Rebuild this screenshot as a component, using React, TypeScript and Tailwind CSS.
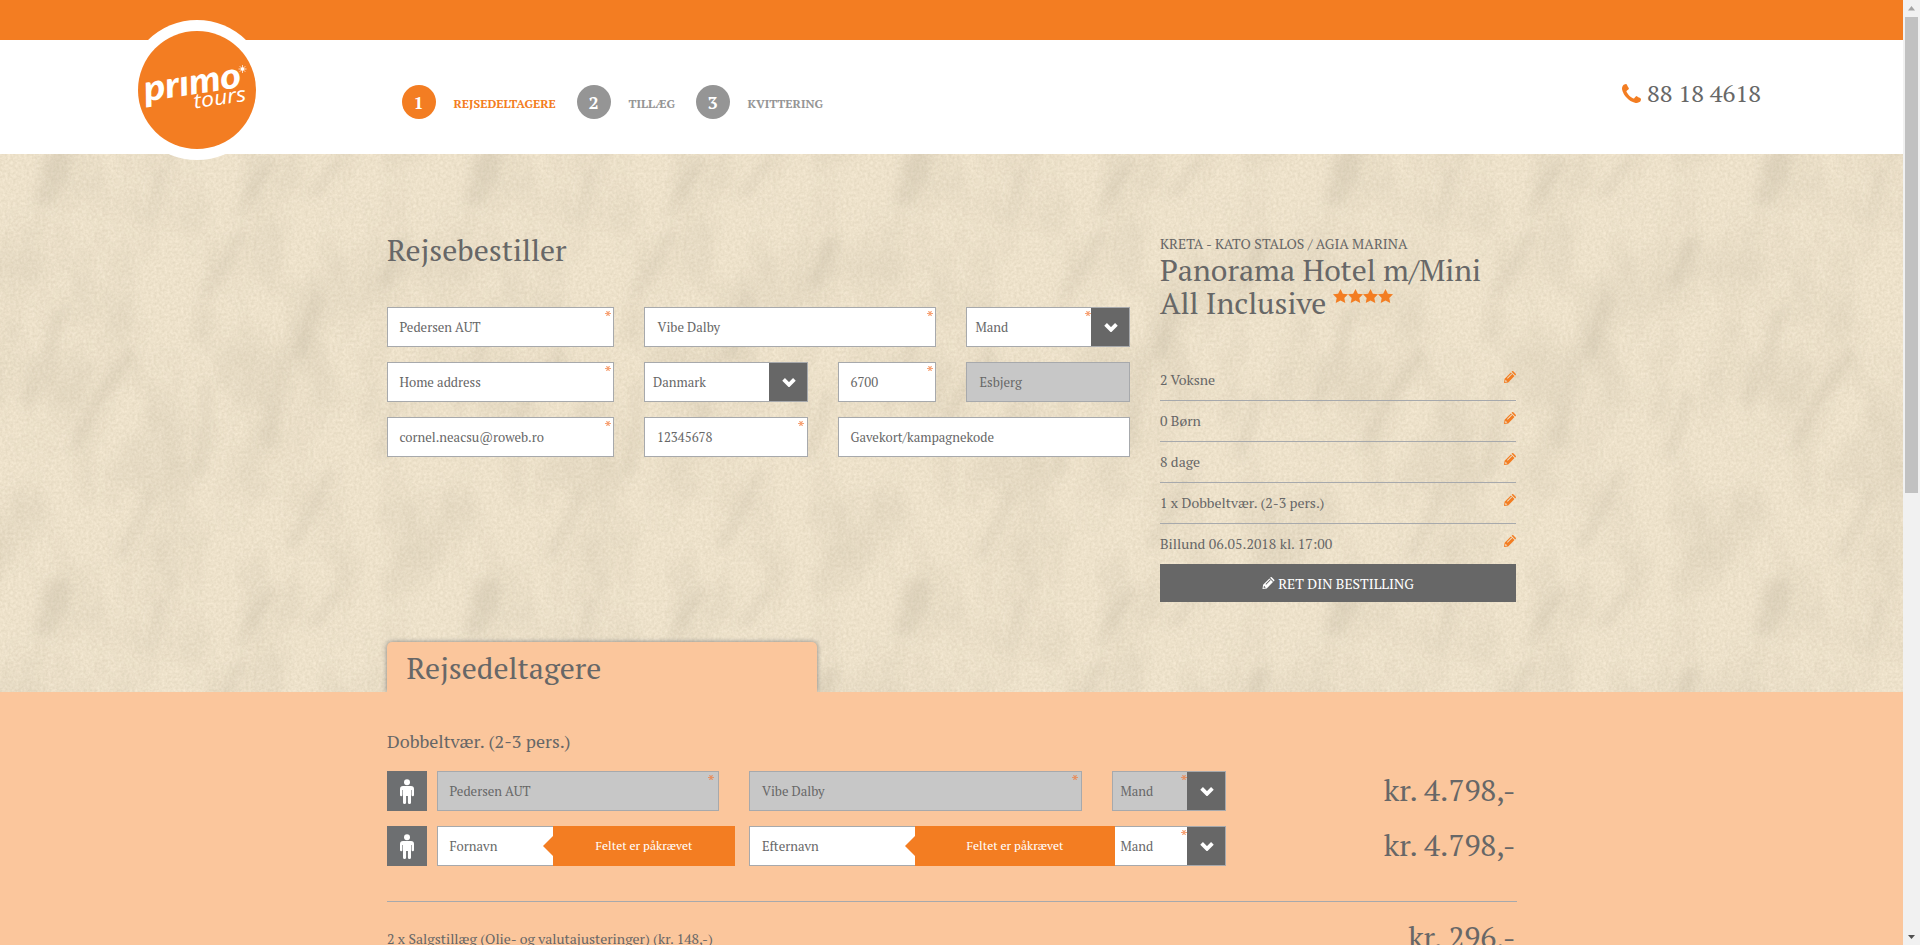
import type { ReactNode } from "react";

const Star = () => (
  <svg viewBox="0 0 15 14" className="h-[14px] w-[15px] fill-[#f37d22]">
    <path d="M7.500 0l2.350 4.700 5.150.55-3.700 3.750.95 5-4.750-2.400L2.750 14l.95-5L0 5.250l5.150-.55z" />
  </svg>
);

const Pencil = ({ className }: { className: string }) => (
  <svg viewBox="0 0 12 12" className={className}>
    <path
      fillRule="evenodd"
      d="M0 12l.6-4.200L6.900 1.500l3.600 3.600L4.200 11.400zM7.600 .8l.5-.5q.6-.6 1.200 0l2.400 2.400q.6.6 0 1.200l-.5.500zM1.500 8.700l-.4 2.200 2.200-.4zM3 7.100l.6.6L8.100 3.200l-.6-.6z"
    />
  </svg>
);

const Phone = () => (
  <svg viewBox="0 128 1408 1408" className="h-[19px] w-[19px] fill-[#f37d22]">
    <path d="M1408 1240q0 27-10 70.500t-21 68.500q-21 50-122 106-94 51-186 51-27 0-53-3.500t-57.500-12.500-47-14.500-55.500-20.500-49-18q-98-35-175-83-127-79-264-216t-216-264q-48-77-83-175-3-9-18-49t-20.500-55.500-14.500-47-12.500-57.500-3.500-53q0-92 51-186 56-101 106-122 25-11 68.500-21t70.500-10q14 0 21 3 18 6 53 76 11 19 30 54t35 63.500 31 53.500q3 4 17.500 25t21.500 35.500 7 28.500q0 20-28.500 50t-62 55-62 53-28.500 46q0 9 5 22.500t8.500 20.500 14 24 11.500 19q76 137 174 235t235 174q2 1 19 11.500t24 14 20.500 8.500 22.500 5q18 0 46-28.500t53-62 55-62 50-28.500q14 0 28.500 7t35.500 21.500 25 17.500q25 15 53.500 31t63.500 35 54 30q70 35 76 53 3 7 3 21z" />
  </svg>
);

const Asterisk = ({ className }: { className: string }) => (
  <svg viewBox="0 0 6 5" className={`absolute h-[5px] w-[6px] ${className}`}>
    <path d="M0 2.500h6M1.500 0l3 5M4.500 0l-3 5" stroke="#f37a3a" strokeOpacity="0.7" strokeWidth="1.200" fill="none" />
  </svg>
);

const PersonBox = () => (
  <div className="flex h-10 w-10 items-center justify-center bg-[#6d6f71]">
    <svg viewBox="0 0 14 25" className="h-[25px] w-[14px] fill-white">
      <circle cx="7" cy="3.200" r="3" />
      <path d="M3 7h8a3 3 0 0 1 3 3v6a1.200 1.200 0 0 1-2.400 0v-5h-.6v12.400a1.500 1.500 0 0 1-3.100 0V17h-1.800v6.400a1.500 1.500 0 0 1-3.100 0V11h-.6v5a1.200 1.200 0 0 1-2.400 0v-6a3 3 0 0 1 3-3z" />
    </svg>
  </div>
);

type FieldProps = { width: string; text: string; required?: boolean; disabled?: boolean; pad?: string; mark?: string; children?: ReactNode };

const Field = ({ width, text, required, disabled, pad = "pl-[11.500px]", mark = "right-[2px]", children }: FieldProps) => (
  <div className={`relative flex h-10 items-center border border-[#a7a9ac] text-[13px] ${width} ${pad} ${disabled ? "bg-[#c7c7c7]" : "bg-white"}`}>
    <span className="pt-[2px]">{text}</span>
    {required && <Asterisk className={`${mark} top-[3px]`} />}
    {children}
  </div>
);

const Select = ({ width, text, required, disabled, pad = "pl-2" }: FieldProps) => (
  <div className={`flex h-10 justify-between border border-[#a7a9ac] text-[13px] ${width} ${pad} ${disabled ? "bg-[#c7c7c7]" : "bg-white"}`}>
    <span className="self-center pt-[2px]">{text}</span>
    <div className="relative flex w-[38px] items-center justify-center bg-[#676767]">
      {required && <Asterisk className="-left-[6px] top-[3px]" />}
      <svg viewBox="0 0 14 9" className="ml-px mt-px h-[9px] w-[14px]">
        <path d="M1.600 1.400L7 6.800l5.400-5.400" fill="none" stroke="#fff" strokeWidth="3.800" />
      </svg>
    </div>
  </div>
);

const Tip = ({ width, offset }: { width: string; offset: string }) => (
  <div className={`absolute -top-px z-10 flex h-10 items-center justify-center bg-[#f37d22] text-[12px] text-white ${width} ${offset}`}>
    <svg viewBox="0 0 10 20" className="absolute -left-[10px] top-[10px] h-5 w-[10px] fill-[#f37d22]">
      <path d="M10 0v20L0 10z" />
    </svg>
    Feltet er påkrævet
  </div>
);

const Step = ({ n, label, active, width }: { n: number; label: string; active?: boolean; width: string }) => (
  <div className={`flex items-center gap-[17.500px] ${width}`}>
    <span className={`flex h-[34px] w-[34px] shrink-0 items-center justify-center rounded-full pr-px text-[18px] font-bold leading-[34px] text-white ${active ? "bg-[#f37d22]" : "bg-[#959595]"}`}>
      {n}
    </span>
    <span className={`whitespace-nowrap pt-[3px] text-[12px] font-bold ${active ? "text-[#f37d22]" : "text-[#959595]"}`}>{label}</span>
  </div>
);

const Sand = () => (
  <svg className="absolute inset-0 h-full w-full" aria-hidden="true">
    <defs>
      <filter id="grain" x="0" y="0" width="100%" height="100%" colorInterpolationFilters="sRGB">
        <feTurbulence type="fractalNoise" baseFrequency="0.37" numOctaves="2" seed="4" stitchTiles="stitch" />
        <feColorMatrix values="0.1 0 0 0 0.880  0.1 0 0 0 0.834  0.11 0 0 0 0.738  0 0 0 0 1" />
      </filter>
      <filter id="cloud" x="0" y="0" width="100%" height="100%" colorInterpolationFilters="sRGB">
        <feTurbulence type="fractalNoise" baseFrequency="0.022 0.012" numOctaves="3" seed="9" stitchTiles="stitch" />
        <feColorMatrix values="0 0 0 0 0.62  0 0 0 0 0.58  0 0 0 0 0.49  0.9 0 0 0 -0.35" />
      </filter>
      <filter id="soft" x="-50%" y="-50%" width="200%" height="200%">
        <feGaussianBlur stdDeviation="6" />
      </filter>
      <g id="creases" filter="url(#soft)" stroke="#958b76" fill="none" strokeLinecap="round" opacity="0.15">
        <path d="M58 6Q54 26 46 42" strokeWidth="24" />
        <path d="M54 20Q52 30 48 40" strokeWidth="14" />
        <path d="M158 18Q160 40 148 62" strokeWidth="10" />
        <path d="M274 6Q256 26 240 58" strokeWidth="9" />
        <path d="M335 10Q326 26 312 40" strokeWidth="9" />
        <path d="M240 80Q226 110 204 140" strokeWidth="9" />
        <path d="M318 145Q306 170 298 200" strokeWidth="9" />
        <path d="M60 160Q44 206 26 250" strokeWidth="8" />
        <path d="M130 200Q100 240 74 292" strokeWidth="10" />
        <path d="M206 230Q208 290 200 320" strokeWidth="9" />
        <path d="M280 210Q282 250 266 290" strokeWidth="9" />
        <path d="M400 90Q390 110 384 130" strokeWidth="12" />
        <path d="M398 240Q392 270 378 300" strokeWidth="10" />
        <path d="M330 320Q310 360 292 390" strokeWidth="11" />
        <path d="M150 340Q136 380 120 400" strokeWidth="10" />
      </g>
      <pattern id="sand" width="430" height="430" patternUnits="userSpaceOnUse">
        <rect width="430" height="430" filter="url(#grain)" />
        <rect width="430" height="430" filter="url(#cloud)" opacity="0.35" />
        <use href="#creases" />
        <use href="#creases" y="430" />
        <use href="#creases" y="-430" />
      </pattern>
    </defs>
    <rect width="100%" height="100%" fill="url(#sand)" />
  </svg>
);

const Logo = () => (
  <svg viewBox="0 0 140 140" className="absolute left-[127px] top-5 z-20 h-[140px] w-[140px]">
    <circle cx="70" cy="70" r="70" fill="#fff" />
    <circle cx="70" cy="70" r="59" fill="#f37d22" />
    <g fill="#fff" transform="translate(18.500 81.500) rotate(-8.500)">
      <text x="0" y="0" fontFamily="Lato, sans-serif" fontWeight="900" fontStyle="italic" fontSize="36" textLength="98" lengthAdjust="spacingAndGlyphs">
        prımo
      </text>
    </g>
    <g fill="#fff" transform="translate(67.500 88.500) rotate(-8.500)">
      <text x="0" y="0" fontFamily="Open Sans, sans-serif" fontStyle="italic" fontSize="20.500" textLength="53" lengthAdjust="spacingAndGlyphs">
        tours
      </text>
    </g>
    <circle cx="115.500" cy="49" r="1.800" fill="#fff" />
    <path d="M115.500 45v8M111.500 49h8M112.700 46.200l5.600 5.600M118.300 46.200l-5.600 5.600" stroke="#fff" strokeWidth="0.7" />
  </svg>
);

const Price = ({ children }: { children: ReactNode }) => (
  <span className="block text-[30px] leading-[38px]">{children}</span>
);

const summary = ["2 Voksne", "0 Børn", "8 dage", "1 x Dobbeltvær. (2-3 pers.)", "Billund 06.05.2018 kl. 17:00"];

export default function App() {
  return (
    <div className="flex h-[945px] w-[1920px] overflow-hidden font-['PT_Serif','Liberation_Serif',serif] text-[#676767]">
      <div className="relative flex w-[1903px] flex-col">
        <Logo />
        <div className="h-10 shrink-0 bg-[#f37d22]" />
        <header className="flex h-[114px] shrink-0 items-start bg-white pl-[402px]">
          <nav className="flex pt-[45px]">
            <Step n={1} label="REJSEDELTAGERE" active width="w-[175px]" />
            <Step n={2} label="TILLÆG" width="w-[119px]" />
            <Step n={3} label="KVITTERING" width="w-[130px]" />
          </nav>
          <div className="ml-auto mr-[142px] flex items-center gap-[6px] pt-[37px] text-[24px] leading-[32px]">
            <Phone />
            <span>88 18 4618</span>
          </div>
        </header>

        <section className="relative h-[538px] shrink-0">
          <Sand />
          <div className="relative flex h-full pl-[387px] pt-[80px]">
            <div className="flex w-[773px] flex-col">
              <h1 className="text-[30px] leading-[33px]">Rejsebestiller</h1>
              <div className="mt-[40px] flex flex-col gap-[15px]">
                <div className="flex gap-[30px]">
                  <Field width="w-[227px]" text="Pedersen AUT" required />
                  <Field width="w-[292px]" text="Vibe Dalby" required pad="pl-[12.500px]" />
                  <Select width="w-[164px]" text="Mand" required pad="pl-[8.500px]" />
                </div>
                <div className="flex gap-[30px]">
                  <Field width="w-[227px]" text="Home address" required />
                  <Select width="w-[164px]" text="Danmark" />
                  <Field width="w-[98px]" text="6700" required />
                  <Field width="w-[164px]" text="Esbjerg" disabled pad="pl-[12.500px]" />
                </div>
                <div className="flex gap-[30px]">
                  <Field width="w-[227px]" text="cornel.neacsu@roweb.ro" required />
                  <Field width="w-[164px]" text="12345678" required pad="pl-3" mark="right-[3px]" />
                  <Field width="w-[292px]" text="Gavekort/kampagnekode" />
                </div>
              </div>
              <div className="mt-auto flex h-[50px] w-[430px] items-center rounded-t-[5px] bg-[#fbc69c] pl-[19.500px] shadow-[0_0_5px_#808080] [clip-path:inset(-10px_-10px_0_-10px)]">
                <h2 className="pt-[3px] text-[30px] leading-[33px]">Rejsedeltagere</h2>
              </div>
            </div>

            <aside className="w-[356px]">
              <div className="text-[14px] leading-[19px] tracking-[0.04px]">KRETA - KATO STALOS / AGIA MARINA</div>
              <div className="mt-px h-[66px] text-[30px] leading-[33px]">
                <div className="whitespace-nowrap">Panorama Hotel m/Mini</div>
                <div className="flex">
                  All Inclusive
                  <span className="ml-[7px] mt-[2px] flex">
                    <Star /><Star /><Star /><Star />
                  </span>
                </div>
              </div>
              <ul className="mt-10 text-[14px] leading-5">
                {summary.map((item, i) => (
                  <li key={item} className={`flex h-[41px] justify-between pt-[10px] ${i < 4 ? "border-b border-[#a7a9ac]" : "-mb-px"}`}>
                    {item}
                    <Pencil className="mt-px h-3 w-3 fill-[#f37d22]" />
                  </li>
                ))}
              </ul>
              <div className="relative flex h-[38px] items-center justify-center gap-[3px] bg-[#676767] text-[14px] text-white">
                <Pencil className="h-3 w-[13px] fill-white" />
                RET DIN BESTILLING
              </div>
            </aside>
          </div>
        </section>

        <section className="flex-1 bg-[#fbc69c] pl-[387px] pt-[39px]">
          <div className="w-[1130px]">
            <h3 className="text-[18px] leading-5">Dobbeltvær. (2-3 pers.)</h3>
            <div className="mt-5 flex flex-col gap-[15px]">
              <div className="flex">
                <PersonBox />
                <div className="ml-[10px] flex gap-[30px]">
                  <Field width="w-[282px]" text="Pedersen AUT" required disabled mark="right-[4px]" />
                  <Field width="w-[333px]" text="Vibe Dalby" required disabled pad="pl-3" mark="right-[3px]" />
                  <Select width="w-[114px]" text="Mand" required disabled pad="pl-[7.500px]" />
                </div>
                <div className="ml-auto pr-[1.500px]"><Price>kr. 4.798,-</Price></div>
              </div>
              <div className="flex">
                <PersonBox />
                <div className="ml-[10px] flex gap-[30px]">
                  <Field width="w-[282px]" text="Fornavn">
                    <Tip width="w-[182px]" offset="left-[115px]" />
                  </Field>
                  <Field width="w-[333px]" text="Efternavn" pad="pl-3">
                    <Tip width="w-[200px]" offset="left-[165px]" />
                  </Field>
                  <Select width="w-[114px]" text="Mand" required pad="pl-[7.500px]" />
                </div>
                <div className="ml-auto pr-[1.500px]"><Price>kr. 4.798,-</Price></div>
              </div>
            </div>
            <div className="mt-[35px] flex justify-between border-t border-[#a7a9ac] pr-[1.500px]">
              <span className="mt-[27px] text-[14px] leading-5">2 x Salgstillæg (Olie- og valutajusteringer) (kr. 148,-)</span>
              <span className="mt-[16px]"><Price>kr. 296,-</Price></span>
            </div>
          </div>
        </section>
      </div>

      <div className="flex w-[17px] flex-col items-center bg-[#f1f1f1]">
        <svg viewBox="0 0 17 17" className="h-[17px] w-[17px]"><path d="M8.500 6L12 10.500H5z" fill="#a3a3a3" /></svg>
        <div className="h-[476px] w-[13px] bg-[#c1c1c1]" />
        <svg viewBox="0 0 17 17" className="mt-auto h-[17px] w-[17px]"><path d="M8.500 11L5 7h7z" fill="#505050" /></svg>
      </div>
    </div>
  );
}
